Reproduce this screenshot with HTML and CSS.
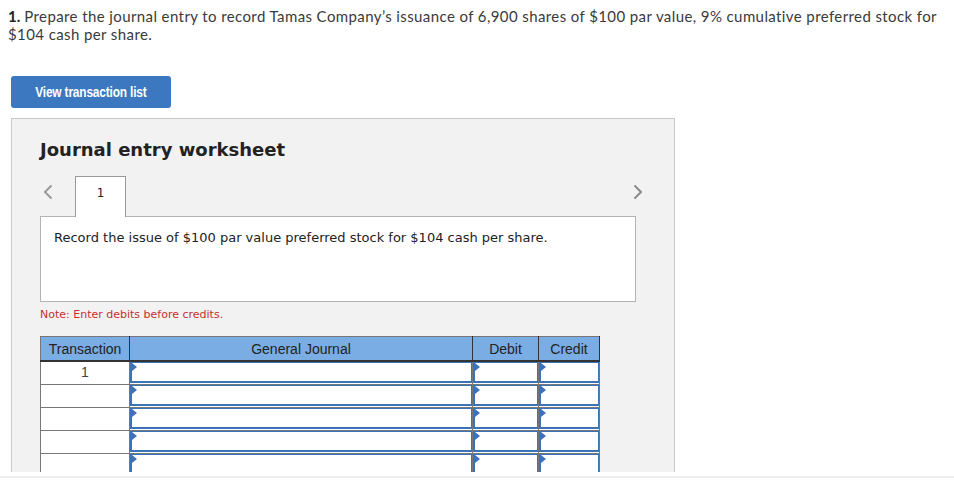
FILE: index.html
```html
<!DOCTYPE html>
<html>
<head>
<meta charset="utf-8">
<link rel="stylesheet" href="styles.css">
</head>
<body>
<div class="viewport">
  <p class="question"><b class="qnum">1.</b>Prepare the journal entry to record Tamas Company’s issuance of 6,900 shares of $100 par value, 9% cumulative preferred stock for $104 cash per share.</p>
  <button class="btn"><span class="btn-label">View transaction list</span></button>
  <div class="panel">
    <h2 class="title">Journal entry worksheet</h2>
    <div class="nav">
      <span class="arrow arrow-left"><svg width="10" height="16" viewBox="0 0 10 16"><polyline points="8.5,1.5 2,8 8.5,14.5" fill="none" stroke="#9a9a9a" stroke-width="2"/></svg></span>
      <div class="tab">1</div>
      <span class="spacer"></span>
      <span class="arrow arrow-right"><svg width="10" height="16" viewBox="0 0 10 16"><polyline points="1.5,1.5 8,8 1.5,14.5" fill="none" stroke="#8a8a8a" stroke-width="2"/></svg></span>
    </div>
    <div class="desc">Record the issue of $100 par value preferred stock for $104 cash per share.</div>
    <p class="note">Note: Enter debits before credits.</p>
    <table class="journal">
      <thead>
        <tr><th class="c-tr">Transaction</th><th class="c-gj">General Journal</th><th class="c-d">Debit</th><th class="c-c">Credit</th></tr>
      </thead>
      <tbody>
        <tr><td class="tr">1</td><td class="in"><div class="box"></div></td><td class="in"><div class="box"></div></td><td class="in"><div class="box"></div></td></tr>
        <tr><td class="tr"></td><td class="in"><div class="box"></div></td><td class="in"><div class="box"></div></td><td class="in"><div class="box"></div></td></tr>
        <tr><td class="tr"></td><td class="in"><div class="box"></div></td><td class="in"><div class="box"></div></td><td class="in"><div class="box"></div></td></tr>
        <tr><td class="tr"></td><td class="in"><div class="box"></div></td><td class="in"><div class="box"></div></td><td class="in"><div class="box"></div></td></tr>
        <tr><td class="tr"></td><td class="in"><div class="box"></div></td><td class="in"><div class="box"></div></td><td class="in"><div class="box"></div></td></tr>
        <tr><td class="tr"></td><td class="in"><div class="box"></div></td><td class="in"><div class="box"></div></td><td class="in"><div class="box"></div></td></tr>
      </tbody>
    </table>
  </div>
</div>
<div class="footer-line"></div>
</body>
</html>
```

FILE: styles.css
```css
html, body {
  margin: 0;
  padding: 0;
  background: #fff;
}
.viewport {
  height: 472px;
  overflow: hidden;
}
.question {
  margin: 0;
  padding: 7px 8px 0 8px;
  font-family: Lato, "Liberation Sans", sans-serif;
  font-size: 15px;
  letter-spacing: 0.4px;
  line-height: 18px;
  color: #3a3a3a;
}
.qnum {
  display: inline-block;
  font-weight: 700;
  color: #222;
  letter-spacing: 0;
  margin-right: 4px;
}
.btn {
  display: flex;
  align-items: center;
  justify-content: center;
  margin: 33px 0 0 11px;
  width: 160px;
  height: 32px;
  border: none;
  border-radius: 3px;
  background: #3b78c0;
  padding: 0;
}
.btn-label {
  display: inline-block;
  color: #fff;
  font-family: "Liberation Sans", Arial, sans-serif;
  font-weight: 700;
  font-size: 14.5px;
  letter-spacing: -0.2px;
  white-space: nowrap;
  transform: scaleX(0.82);
}
.panel {
  margin: 10px 0 0 11px;
  width: 664px;
  height: 400px;
  border: 1px solid #c8c8c8;
  background: #f2f2f2;
  padding: 0 0 0 28px;
  box-sizing: border-box;
}
.title {
  margin: 0;
  padding-top: 20px;
  font-family: "DejaVu Sans", Verdana, sans-serif;
  font-weight: 700;
  font-size: 18px;
  line-height: 22px;
  color: #222;
}
.nav {
  display: flex;
  align-items: flex-end;
  margin-top: 15px;
  width: 606px;
}
.arrow {
  align-self: flex-start;
  display: block;
  line-height: 0;
  margin-top: 8px;
}
.arrow-left {
  width: 35px;
  padding-left: 3px;
  box-sizing: border-box;
}
.tab {
  position: relative;
  z-index: 1;
  width: 51px;
  height: 41px;
  box-sizing: border-box;
  border: 1px solid #999;
  border-bottom: none;
  background: #fff;
  margin-bottom: -1px;
  text-align: center;
  font-family: "DejaVu Sans", Verdana, sans-serif;
  font-size: 12px;
  line-height: 14px;
  padding-top: 9px;
  color: #222;
}
.spacer { flex: 1; }
.arrow-right {
  padding-right: 3px;
}
.desc {
  width: 596px;
  height: 86px;
  box-sizing: border-box;
  border: 1px solid #b3b3b3;
  background: #fff;
  padding: 13px 0 0 13px;
  font-family: "DejaVu Sans", Verdana, sans-serif;
  font-size: 13px;
  line-height: 16px;
  color: #222;
}
.note {
  margin: 6px 0 0 0;
  font-family: "DejaVu Sans", Verdana, sans-serif;
  font-size: 11px;
  line-height: 14px;
  color: #c53030;
}
.journal {
  margin-top: 14px;
  border-collapse: collapse;
  table-layout: fixed;
  width: 555px;
  font-family: "Liberation Sans", Arial, sans-serif;
  font-size: 14px;
}
.journal th {
  height: 23px;
  padding: 0;
  background: #7aade3;
  font-weight: 400;
  color: #222;
  border: 1px solid #333;
  border-top-color: #777;
  border-bottom: 2px solid #333;
  text-align: center;
}
.journal th.c-tr { border-left-color: #777; }
.c-tr { width: 88px; }
.c-gj { width: 342px; }
.c-d { width: 65px; }
.c-c { width: 60px; }
.journal td {
  height: 23px;
  padding: 0;
  border: 1px solid #777;
  background: #fff;
  box-sizing: border-box;
}
.journal td.tr {
  text-align: center;
  color: #444;
  vertical-align: top;
  line-height: 20px;
}
.journal td.in {
  vertical-align: top;
}
.box {
  position: relative;
  height: 21px;
  box-sizing: border-box;
  border: 1px solid #3b73b9;
  border-left-width: 2px;
  border-bottom-width: 2px;
}
.box::before {
  content: "";
  position: absolute;
  left: 0;
  top: 0;
  border-left: 5px solid #3b73b9;
  border-top: 4px solid transparent;
  border-bottom: 4px solid transparent;
}
.footer-line {
  margin-top: 4px;
  border-top: 2px solid #eee;
}
```
